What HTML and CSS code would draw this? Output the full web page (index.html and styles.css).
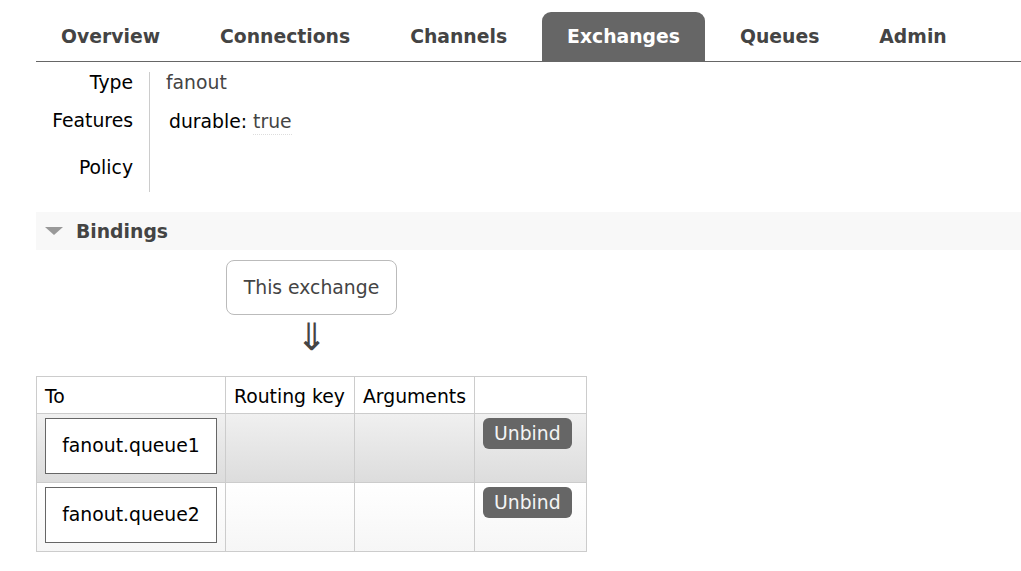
FILE: index.html
```html
<!DOCTYPE html>
<html>
<head>
<meta charset="utf-8">
<link rel="stylesheet" href="styles.css">
</head>
<body>
<div class="page">
  <ul class="tabs">
    <li><a class="tab">Overview</a></li>
    <li><a class="tab">Connections</a></li>
    <li><a class="tab">Channels</a></li>
    <li><a class="tab active">Exchanges</a></li>
    <li><a class="tab">Queues</a></li>
    <li><a class="tab">Admin</a></li>
  </ul>

  <div class="facts">
    <div class="label r1">Type</div>
    <div class="value r1"><span class="grey">fanout</span></div>
    <div class="label r2">Features</div>
    <div class="value r2"><span class="feat">durable:</span> <abbr class="grey dotted">true</abbr></div>
    <div class="label r3">Policy</div>
    <div class="value r3"></div>
  </div>

  <div class="section-head">
    <span class="tri"></span>
    <span class="section-title">Bindings</span>
  </div>

  <div class="bindings">
    <div class="source"><span class="source-box">This exchange</span></div>
    <p class="arrow">&#8659;</p>
    <table class="list">
      <thead>
        <tr>
          <th class="c-to">To</th>
          <th class="c-rk">Routing key</th>
          <th class="c-args">Arguments</th>
          <th class="c-act"></th>
        </tr>
      </thead>
      <tbody>
        <tr class="alt1">
          <td><span class="queue-box">fanout.queue1</span></td>
          <td></td>
          <td></td>
          <td><button class="btn">Unbind</button></td>
        </tr>
        <tr class="alt2">
          <td><span class="queue-box">fanout.queue2</span></td>
          <td></td>
          <td></td>
          <td><button class="btn">Unbind</button></td>
        </tr>
      </tbody>
    </table>
  </div>
</div>
</body>
</html>
```
FILE: styles.css
```css
html, body {
  margin: 0;
  padding: 0;
  background: #fff;
}
body {
  font-family: "DejaVu Sans", sans-serif;
  font-size: 18.8px;
  color: #000;
}
.page {
  padding-left: 36px;
}
.tabs {
  list-style: none;
  margin: 0;
  padding: 12px 0 0 0;
  display: flex;
  border-bottom: 1px solid #666;
}
.tabs li {
  margin-right: 10px;
}
.tab {
  display: block;
  padding: 0 25px;
  height: 49px;
  line-height: 49px;
  font-weight: bold;
  color: #444;
  border-radius: 9px 9px 0 0;
}
.tab.active {
  background: #666;
  color: #fff;
}

.facts {
  display: grid;
  grid-template-columns: 113px auto;
  grid-template-rows: 22px 53px 45px;
  margin-top: 10px;
  line-height: 22px;
}
.label {
  text-align: right;
  padding-right: 16px;
}
.value {
  border-left: 1px solid #ccc;
  padding-left: 16px;
}
.r2 {
  padding-top: 16px;
}
.value.r2 {
  padding-top: 17px;
}
.r3 {
  padding-top: 10px;
}
.grey {
  color: #444;
}
.feat {
  margin-left: 3px;
}
.dotted {
  text-decoration: none;
  border-bottom: 1px dotted #ddd;
  padding-bottom: 2px;
}

.section-head {
  margin-top: 20px;
  height: 38px;
  background: #f8f8f8;
  display: flex;
  align-items: center;
}
.tri {
  width: 0;
  height: 0;
  margin-left: 9px;
  margin-right: 13px;
  border-left: 9px solid transparent;
  border-right: 9px solid transparent;
  border-top: 8px solid #999;
}
.section-title {
  font-weight: bold;
  color: #444;
}

.bindings {
  display: inline-flex;
  flex-direction: column;
  align-items: center;
}
.source {
  margin-top: 10px;
}
.source-box {
  display: inline-block;
  border: 1px solid #bbb;
  border-radius: 8px;
  padding: 0 17px;
  height: 53px;
  line-height: 53px;
  color: #444;
}
.arrow {
  margin: 0;
  font-size: 200%;
  line-height: 44px;
  height: 61px;
  color: #444;
}
.list {
  border-collapse: collapse;
  border: 1px solid #ccc;
}
.list th, .list td {
  border: 1px solid #ccc;
  font-weight: normal;
  text-align: left;
  vertical-align: top;
}
.list th {
  height: 33px;
  padding: 3px 8px 0 8px;
  line-height: 33px;
}
.list td {
  padding: 4px 8px 7px 8px;
  height: 57px;
}
.c-to { width: 172px; }
.c-rk { width: 112px; }
.c-args { width: 103px; }
.c-act { width: 95px; }
.alt1 {
  background: linear-gradient(#f0f0f0, #dcdcdc);
}
.alt2 {
  background: linear-gradient(#ffffff, #f6f6f6);
}
.queue-box {
  display: block;
  width: 170px;
  height: 54px;
  line-height: 54px;
  border: 1px solid #666;
  background: #fff;
  text-align: center;
}
.btn {
  font-family: "DejaVu Sans", sans-serif;
  font-size: 18.8px;
  background: #666;
  color: #f4f4f4;
  border: none;
  border-radius: 6px;
  height: 31px;
  padding: 0 11px;
  line-height: 29px;
}
```
